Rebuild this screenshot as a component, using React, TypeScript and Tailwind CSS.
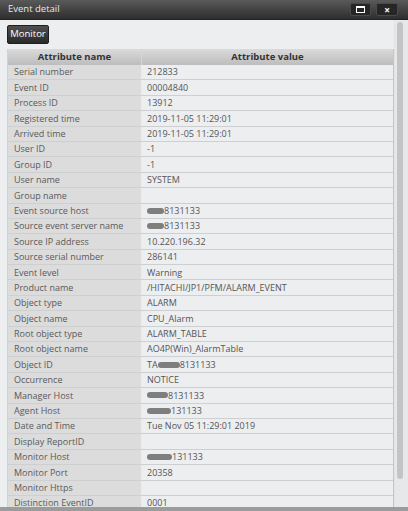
import React from "react";

type Row = { name: string; value?: string; blob?: { pre?: string; w: number; post: string } };

const rows: Row[] = [
  { name: "Serial number", value: "212833" },
  { name: "Event ID", value: "00004840" },
  { name: "Process ID", value: "13912" },
  { name: "Registered time", value: "2019-11-05 11:29:01" },
  { name: "Arrived time", value: "2019-11-05 11:29:01" },
  { name: "User ID", value: "-1" },
  { name: "Group ID", value: "-1" },
  { name: "User name", value: "SYSTEM" },
  { name: "Group name", value: "" },
  { name: "Event source host", blob: { w: 17, post: "8131133" } },
  { name: "Source event server name", blob: { w: 17, post: "8131133" } },
  { name: "Source IP address", value: "10.220.196.32" },
  { name: "Source serial number", value: "286141" },
  { name: "Event level", value: "Warning" },
  { name: "Product name", value: "/HITACHI/JP1/PFM/ALARM_EVENT" },
  { name: "Object type", value: "ALARM" },
  { name: "Object name", value: "CPU_Alarm" },
  { name: "Root object type", value: "ALARM_TABLE" },
  { name: "Root object name", value: "AO4P(Win)_AlarmTable" },
  { name: "Object ID", blob: { pre: "TA", w: 22, post: "8131133" } },
  { name: "Occurrence", value: "NOTICE" },
  { name: "Manager Host", blob: { w: 21, post: "8131133" } },
  { name: "Agent Host", blob: { w: 24, post: "131133" } },
  { name: "Date and Time", value: "Tue Nov 05 11:29:01 2019" },
  { name: "Display ReportID", value: "" },
  { name: "Monitor Host", blob: { w: 25, post: "131133" } },
  { name: "Monitor Port", value: "20358" },
  { name: "Monitor Https", value: "" },
  { name: "Distinction EventID", value: "0001" },
];

export default function App() {
  const font = { fontFamily: '"Open Sans", "Liberation Sans", sans-serif' };
  return (
    <div
      className="w-[408px] h-[511px] overflow-hidden bg-[#eceef0] flex flex-col text-[9px]"
      style={font}
    >
      {/* Title bar */}
      <div className="h-[20px] shrink-0 flex items-center bg-gradient-to-b from-[#5a5a5a] to-[#2e2e2e] border-b border-[#222] pl-[8px] pr-[10px]">
        <span className="text-[#e8e8e8] text-[9.5px] flex-1">Event detail</span>
        <div className="w-[21px] h-[13px] bg-[#262626] border border-[#4a4a4a] rounded-[2px] flex items-center justify-center mr-[5px]">
          <div className="w-[9px] h-[7px] border border-white border-t-[2px]" />
        </div>
        <div className="w-[22px] h-[13px] bg-[#262626] border border-[#4a4a4a] rounded-[2px] flex items-center justify-center">
          <span className="text-white text-[10px] font-bold leading-none">×</span>
        </div>
      </div>

      {/* Body */}
      <div className="flex-1 min-h-0 flex overflow-hidden">
        <div className="w-[394px] pl-[7px] flex flex-col shrink-0">
          <div className="mt-[5px] shrink-0 w-[42px] h-[19px] rounded-[2px] bg-gradient-to-b from-[#505050] to-[#2a2a2a] border border-[#1e1e1e] flex items-center justify-center text-white text-[9.5px]">
            Monitor
          </div>
          <div className="mt-[5px] shrink-0 w-[387px] border-l border-[#d0d2d4] border-r border-r-[#c4c6c8]">
            <div className="flex h-[16px] bg-gradient-to-b from-[#dadada] to-[#bdbdbd] text-[#333] font-bold text-[9.5px]">
              <div className="w-[134px] flex items-center justify-center border-r border-[#d6d6d6]">Attribute name</div>
              <div className="flex-1 flex items-center justify-center">Attribute value</div>
            </div>
            {rows.map((r) => (
              <div key={r.name} className="flex h-[15.4px] border-b border-[#cdcfd1]">
                <div className="w-[134px] shrink-0 bg-[#dcdcdc] flex items-center pl-[6px] text-[#5a5a5a] border-r border-[#ececec] whitespace-nowrap">
                  {r.name}
                </div>
                <div className="flex-1 flex items-center pl-[5px] text-[#555] whitespace-nowrap">
                  {r.blob ? (
                    <>
                      {r.blob.pre && <span>{r.blob.pre}</span>}
                      <span
                        className="inline-block h-[6px] rounded-full bg-[#7e7e7e]"
                        style={{ width: r.blob.w }}
                      />
                      <span>{r.blob.post}</span>
                    </>
                  ) : (
                    r.value
                  )}
                </div>
              </div>
            ))}
          </div>
        </div>
        {/* Scrollbar */}
        <div className="flex-1 bg-[#e6e8ea] flex pl-[2px] pt-[2px] border-l border-[#e0e2e4]">
          <div className="w-[6px] h-[457px] rounded-[3px] bg-[#c4c4c4]" />
        </div>
      </div>
      <div className="h-[4px] shrink-0 bg-[#9c9c9c]" />
    </div>
  );
}
